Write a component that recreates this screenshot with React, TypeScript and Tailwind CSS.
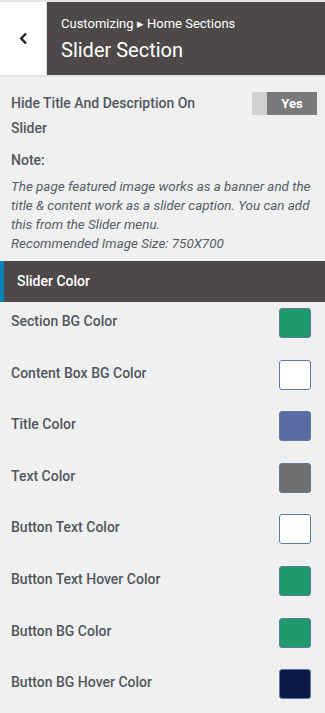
import React from 'react'

const colors: { label: string; value: string }[] = [
  { label: 'Section BG Color', value: '#1f9a6d' },
  { label: 'Content Box BG Color', value: '#ffffff' },
  { label: 'Title Color', value: '#5a6ba6' },
  { label: 'Text Color', value: '#707070' },
  { label: 'Button Text Color', value: '#ffffff' },
  { label: 'Button Text Hover Color', value: '#1f9a6d' },
  { label: 'Button BG Color', value: '#1f9a6d' },
  { label: 'Button BG Hover Color', value: '#0c1a47' },
]

export default function App() {
  return (
    <div className="w-[325px] min-h-[713px] bg-[#f0f0f0] font-['Roboto',sans-serif] text-[#50575e]">
      {/* header */}
      <div className="flex h-[77px] border-y-2 border-[#e4e4e4]">
        <button className="flex w-[47px] items-center justify-center bg-white border-r border-[#dcdcdc]">
          <svg width="9" height="13" viewBox="0 0 9 13" fill="none">
            <path d="M7 1.5 L2.2 6.5 L7 11.5" stroke="#1d2327" strokeWidth="2.4" />
          </svg>
        </button>
        <div className="flex-1 bg-[#4d4948] pl-[14px] pt-[13px] text-white">
          <div className="text-[13px] leading-[18px]">Customizing ▸ Home Sections</div>
          <div className="mt-[4px] text-[20px] leading-[26px]">Slider Section</div>
        </div>
      </div>

      {/* toggle */}
      <div className="flex items-start justify-between px-[11px] pt-[14px]">
        <div className="w-[200px] text-[14px] font-medium leading-[25px]">
          Hide Title And Description On Slider
        </div>
        <div className="mt-[1px] flex h-[23px] w-[65px] mr-[-3px]">
          <div className="w-[15px] bg-[#d0d0d0]" />
          <div className="flex flex-1 items-center justify-center bg-[#7a7a7a] text-[13px] font-bold text-white">
            Yes
          </div>
        </div>
      </div>

      {/* note */}
      <div className="px-[11px] pt-[9px]">
        <div className="text-[14px] font-medium leading-[20px]">Note:</div>
        <p className="mt-[7px] text-[13.4px] italic leading-[19px] text-[#555d66]">
          The page featured image works as a banner and the title &amp; content work as a slider caption. You can add this from the Slider menu.
          <br />
          Recommended Image Size: 750X700
        </p>
      </div>

      {/* section title */}
      <div className="mt-[8px] flex h-[41px] items-center border-l-4 border-[#0085ba] bg-[#4d4948] pl-[13px] text-[14px] font-medium text-white">
        Slider Color
      </div>

      {/* color rows */}
      <div className="px-[11px] pt-[6px]">
        {colors.map((c) => (
          <div key={c.label} className="flex h-[51.6px] items-start justify-between">
            <span className="mt-[3px] text-[14px] font-medium leading-[20px]">{c.label}</span>
            <span
              className="mr-[3px] h-[30px] w-[32px] rounded-[3px] border border-[#5a7ca0]"
              style={{ backgroundColor: c.value }}
            />
          </div>
        ))}
      </div>
    </div>
  )
}
